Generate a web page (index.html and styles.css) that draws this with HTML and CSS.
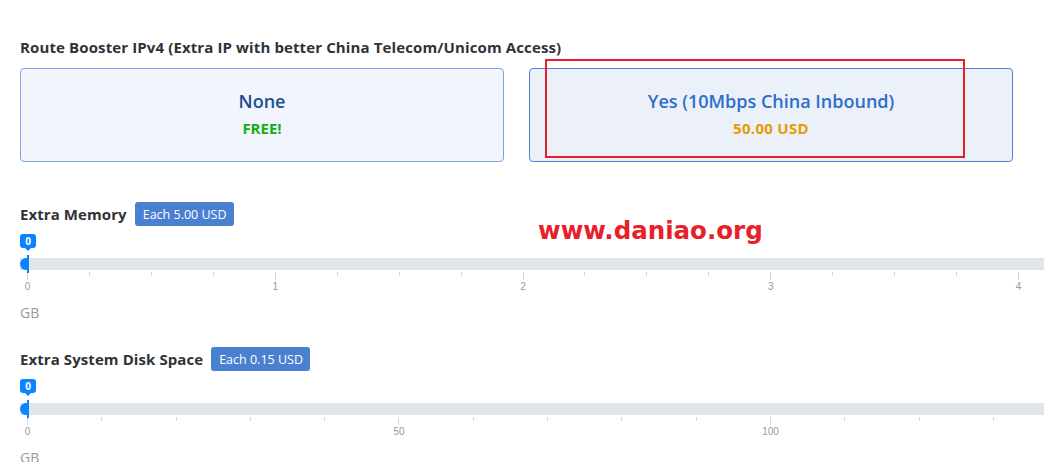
FILE: index.html
```html
<!DOCTYPE html>
<html>
<head>
<meta charset="utf-8">
<link rel="stylesheet" href="styles.css">
</head>
<body>
<div class="page">
  <h3 class="group-title">Route Booster IPv4 (Extra IP with better China Telecom/Unicom Access)</h3>
  <div class="options">
    <div class="card">
      <div class="card-name">None</div>
      <div class="card-price free">FREE!</div>
    </div>
    <div class="card active">
      <div class="card-name">Yes (10Mbps China Inbound)</div>
      <div class="card-price paid">50.00 USD</div>
    </div>
  </div>

  <div class="addon first">
    <div class="addon-head">
      <h3 class="addon-title">Extra Memory</h3>
      <span class="badge">Each 5.00 USD</span>
    </div>
    <div class="bubble-row"><span class="bubble">0</span></div>
    <div class="track"><span class="handle"></span></div>
    <div class="ticks mem">
      <i class="major"></i><i></i><i></i><i></i>
      <i class="major"></i><i></i><i></i><i></i>
      <i class="major"></i><i></i><i></i><i></i>
      <i class="major"></i><i></i><i></i><i></i>
      <i class="major"></i><i></i><i></i><i></i>
    </div>
    <div class="labels mem">
      <span><b>0</b></span><span><b>1</b></span><span><b>2</b></span><span><b>3</b></span><span><b>4</b></span>
    </div>
    <div class="unit">GB</div>
  </div>

  <div class="addon">
    <div class="addon-head">
      <h3 class="addon-title">Extra System Disk Space</h3>
      <span class="badge">Each 0.15 USD</span>
    </div>
    <div class="bubble-row"><span class="bubble">0</span></div>
    <div class="track"><span class="handle"></span></div>
    <div class="ticks disk">
      <i class="major"></i><i></i><i></i><i></i><i></i>
      <i class="major"></i><i></i><i></i><i></i><i></i>
      <i class="major"></i><i></i><i></i><i></i><i></i>
    </div>
    <div class="labels disk">
      <span><b>0</b></span><span><b>50</b></span><span><b>100</b></span>
    </div>
    <div class="unit">GB</div>
  </div>

  <div class="watermark">www.daniao.org</div>
  <div class="highlight"></div>
</div>
</body>
</html>
```

FILE: styles.css
```css
html, body {
  margin: 0;
  padding: 0;
  background: #fff;
  overflow: hidden;
}
body {
  font-family: "Open Sans", "Noto Sans", sans-serif;
  color: #333;
}
.page {
  position: relative;
  padding: 37px 0 0 20px;
  width: 1200px;
}
.group-title {
  margin: 0;
  font-size: 15px;
  line-height: 20px;
  font-weight: 700;
  letter-spacing: 0.12px;
  color: #2f3337;
}
.options {
  display: grid;
  grid-template-columns: 484px 484px;
  column-gap: 25px;
  margin-top: 11px;
}
.card {
  box-sizing: border-box;
  height: 94px;
  border: 1px solid #7ba6e2;
  border-radius: 4px;
  background: #f2f5fd;
  display: flex;
  flex-direction: column;
  align-items: center;
  justify-content: center;
  gap: 5px;
  padding-bottom: 4px;
}
.card.active {
  background: #ecf0f9;
  border-color: #4a84d6;
}
.card-name {
  font-size: 18px;
  line-height: 24px;
  font-weight: 600;
  color: #1c4f90;
}
.card.active .card-name {
  color: #2a6fcb;
}
.card-price {
  font-size: 15px;
  line-height: 20px;
  font-weight: 700;
}
.free { color: #10b010; }
.paid { color: #e69b00; letter-spacing: 0.3px; }

.addon { margin-top: 24px; }
.addon.first { margin-top: 40px; }
.addon-head {
  display: flex;
  align-items: center;
  gap: 8px;
  height: 24px;
}
.addon-title {
  margin: 0;
  font-size: 15px;
  line-height: 20px;
  font-weight: 700;
  letter-spacing: 0.08px;
  color: #2f3337;
}
.badge {
  display: inline-flex;
  align-items: center;
  height: 24px;
  padding: 0 7px 0 8px;
  background: #4a80d0;
  color: #fff;
  font-size: 12.5px;
  border-radius: 3px;
}
.bubble-row {
  display: flex;
  height: 17px;
  margin-top: 8px;
}
.bubble {
  position: relative;
  display: flex;
  align-items: center;
  justify-content: center;
  width: 16px;
  height: 14px;
  border-radius: 3px;
  background: #0a84ff;
  color: #fff;
  font-size: 10px;
  line-height: 14px;
  font-weight: 700;
}
.bubble::after {
  content: "";
  position: absolute;
  left: 5px;
  bottom: -3px;
  border-left: 3px solid transparent;
  border-right: 3px solid transparent;
  border-top: 3px solid #0a84ff;
}
.track {
  position: relative;
  margin-top: 7px;
  height: 12px;
  width: 1100px;
  background: #e1e4e9;
}
.handle {
  position: absolute;
  left: 0;
  top: 0;
  width: 8px;
  height: 12px;
  border-radius: 6px 0 0 6px;
  background: #0a84ff;
}
.handle::after {
  content: "";
  position: absolute;
  left: 7px;
  top: -3px;
  width: 2px;
  height: 18px;
  background: #0a84ff;
}
.ticks {
  display: flex;
  align-items: flex-start;
  margin: 2px 0 0 7px;
  height: 8px;
}
.ticks i {
  flex: none;
  height: 4px;
  border-left: 1px solid #d3d6db;
}
.ticks.mem i { width: 60.94px; }
.ticks.disk i { width: 73.3px; }
.ticks i.major { height: 8px; }
.labels {
  display: flex;
  margin: 1px 0 0 7.5px;
  height: 12px;
  font-size: 10px;
  line-height: 12px;
  color: #999;
  font-family: "Liberation Sans", sans-serif;
}
.labels span { flex: none; }
.labels.mem span { width: 247.75px; }
.labels.disk span { width: 371.5px; }
.labels b {
  display: inline-block;
  font-weight: 400;
  transform: translateX(-50%);
}
.unit {
  margin-top: 10px;
  font-size: 14px;
  line-height: 20px;
  color: #999;
}
.watermark {
  position: absolute;
  left: 538px;
  top: 215px;
  font-family: "DejaVu Sans", sans-serif;
  font-weight: 700;
  font-size: 24.5px;
  line-height: 32px;
  color: #e8202a;
}
.highlight {
  position: absolute;
  left: 545px;
  top: 59px;
  width: 416px;
  height: 95px;
  border: 2px solid #e5202a;
}
```
